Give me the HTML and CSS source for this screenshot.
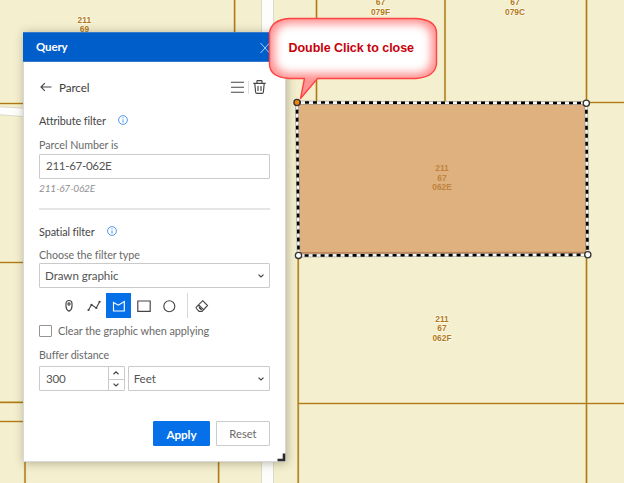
FILE: index.html
```html
<!DOCTYPE html>
<html lang="en">
<head>
<meta charset="utf-8">
<title>Parcel query</title>
<link rel="stylesheet" href="styles.css">
</head>
<body>
<main class="map">
  <svg class="map-layer" viewBox="0 0 624 483" width="624" height="483">
    <path class="road" d="M261.500 -5H273.500V490H261.500ZM-5 106.500L30 108.500V117L-5 114.500Z"/>
    <path class="lot-glow" d="M-2 103.500H30M-2 262.500H30M-2 402.300H30M-2 421.500H30M25 455V485M218.600 455V485M234.600 -2V40M316.500 -2V102M445 -2V103M586.500 -2V485M586 102.500H626M298.200 255V485M298 403.500H626"/>
    <path class="lot" d="M-2 103.500H30M-2 262.500H30M-2 402.300H30M-2 421.500H30M25 455V485M218.600 455V485M234.600 -2V40M316.500 -2V102M445 -2V103M586.500 -2V485M586 102.500H626M298.200 255V485M298 403.500H626"/>
    <g class="lot-label">
      <text x="84.300" y="22.500">211</text><text x="84.500" y="32">69</text>
      <text x="380.500" y="5">67</text><text x="380.500" y="14.500">079F</text>
      <text x="515" y="5">67</text><text x="515" y="14.500">079C</text>
      <text x="442" y="321.500">211</text><text x="442" y="331">67</text><text x="442" y="340.700">062F</text>
    </g>
    <path class="area" d="M297 102.500L586.300 103L587.500 254.500L298.500 255.500Z"/>
    <path class="area-shade" d="M299 252.800L586 252.300V104"/>
    <g class="lot-label muted">
      <text x="442" y="171">211</text><text x="442" y="180.500">67</text><text x="442" y="190.300">062E</text>
    </g>
    <path class="edge rim" d="M297 102.500L586.300 103L587.500 254.800L298.500 255.500Z"/>
    <path class="edge" d="M297 102.500L586.300 103L587.500 254.800L298.500 255.500Z"/>
    <path class="edge dash" d="M297 102.500L586.300 103L587.500 254.800L298.500 255.500Z"/>
    <g class="vertex"><circle cx="586.300" cy="103.200" r="3.100"/><circle cx="587.800" cy="254.800" r="3.100"/><circle cx="298.500" cy="255.400" r="3.100"/><circle class="active" cx="297" cy="102.500" r="3.100"/></g>
  </svg>

  <section class="panel">
    <header class="panel-head">
      <h1>Query</h1>
      <svg width="10" height="12" viewBox="0 0 10 12"><path d="M.5 1L9.500 11M9.500 1L.5 11"/></svg>
    </header>
    <div class="panel-body">
      <div class="task">
        <svg class="ico" width="12" height="10" viewBox="0 0 12 10"><path d="M11.500 5H1M4.800 1.200L1 5L4.800 8.800"/></svg>
        <span class="task-name">Parcel</span>
        <svg class="ico" width="13" height="12" viewBox="0 0 13 12"><path d="M0 1.200H13M0 6.200H13M0 11.200H13"/></svg>
        <i class="bar"></i>
        <svg class="ico" width="13" height="14" viewBox="0 0 13 14"><path d="M.3 3.300H12.700M4 3V1Q4 .6 4.500.6H8.500Q9 .6 9 1V3M1.800 3.500L2.600 12Q2.700 13.400 4 13.400H9Q10.300 13.400 10.400 12L11.200 3.500M5 6V11M8 6V11"/></svg>
      </div>
      <h2 class="attr"><span>Attribute filter</span>
        <svg class="info" width="10" height="10" viewBox="0 0 10 10"><circle cx="5" cy="5" r="4.400"/><path d="M5 4.300V7.600M5 2.200V3.300"/></svg></h2>
      <label class="caption c-number">Parcel Number is</label>
      <div class="field value"><span>211-67-062E</span></div>
      <p class="hint">211-67-062E</p>
      <hr>
      <h2 class="spatial"><span>Spatial filter</span>
        <svg class="info" width="10" height="10" viewBox="0 0 10 10"><circle cx="5" cy="5" r="4.400"/><path d="M5 4.300V7.600M5 2.200V3.300"/></svg></h2>
      <label class="caption c-type">Choose the filter type</label>
      <div class="field select"><span>Drawn graphic</span>
        <svg class="chev" width="6" height="4" viewBox="0 0 6 4"><path d="M.5.6L3 3L5.500.6"/></svg></div>
      <div class="tools">
        <span class="tool"><svg class="ico" width="14" height="14" viewBox="0 0 14 14"><path d="M7 12.300C5 11.300 4 9.500 4 7V4.500C4 2.700 5.300 1.500 7 1.500S10 2.700 10 4.500V7C10 9.500 9 11.300 7 12.300Z"/><circle cx="7" cy="5" r="1.100"/></svg></span>
        <span class="tool"><svg class="ico" width="14" height="14" viewBox="0 0 14 14"><path d="M1.500 11L4.500 5.800L9.300 9L12.600 2.800"/><path class="nodes" d="M1.500 11h.01M4.500 5.800h.01M9.300 9h.01M12.600 2.800h.01"/></svg></span>
        <span class="tool on"><svg class="ico" width="14" height="14" viewBox="0 0 14 14"><path d="M1.500 12V3.500L6.300 6.200L12.300 2.500V12Z"/></svg></span>
        <span class="tool"><svg class="ico" width="14" height="14" viewBox="0 0 14 14"><path d="M.8 2H13.200V12.300H.8Z"/></svg></span>
        <span class="tool"><svg class="ico" width="14" height="14" viewBox="0 0 14 14"><circle cx="7.300" cy="7.200" r="5.500"/></svg></span>
        <span class="tool erase"><svg class="ico" width="14" height="14" viewBox="0 0 14 14"><path d="M7.700 1.700L12.500 6.500L7 12.300H4L1.200 9.300Q.9 8.500 1.500 7.900ZM3.700 5.800L8.500 10.600"/><path class="fill" d="M3.700 6.800L7.200 10.400L6.200 11.300L3.800 9Z"/></svg></span>
      </div>
      <label class="check"><i></i><span>Clear the graphic when applying</span></label>
      <label class="caption c-buffer">Buffer distance</label>
      <div class="distance">
        <div class="field number"><span>300</span>
          <div class="steps">
            <b><svg class="chev" width="6" height="4" viewBox="0 0 6 4"><path d="M.5 3.200L3 .8L5.500 3.200"/></svg></b>
            <b><svg class="chev" width="6" height="4" viewBox="0 0 6 4"><path d="M.5.6L3 3L5.500.6"/></svg></b>
          </div>
        </div>
        <div class="field select unit"><span>Feet</span>
          <svg class="chev" width="6" height="4" viewBox="0 0 6 4"><path d="M.5.6L3 3L5.500.6"/></svg></div>
      </div>
      <div class="actions"><button class="primary">Apply</button><button>Reset</button></div>
    </div>
    <svg class="grip" width="9" height="9" viewBox="0 0 9 9"><path d="M7 .5V7H.5"/></svg>
  </section>

  <svg class="callout" width="180" height="96" viewBox="262 10 180 96">
    <defs>
      <filter id="soft" x="-20%" y="-30%" width="140%" height="160%"><feGaussianBlur stdDeviation="4.500"/></filter>
      <clipPath id="bubble"><path d="M289 18.500H416Q436.500 20 436.500 33V64Q435 77 416 78.500H317.500L300.500 98.500L304.500 78.500H289Q269.500 77 269.500 64V33Q271 20 289 18.500Z"/></clipPath>
    </defs>
    <g clip-path="url(#bubble)"><path class="bubble-bg" d="M262 10H442V106H262Z"/><rect class="bubble-core" x="275" y="24" width="156" height="49" rx="14" filter="url(#soft)"/></g>
    <path class="bubble-line" d="M289 18.500H416Q436.500 20 436.500 33V64Q435 77 416 78.500H317.500L300.500 98.500L304.500 78.500H289Q269.500 77 269.500 64V33Q271 20 289 18.500Z"/>
    <text x="288.500" y="52.300" textLength="125.500">Double Click to close</text>
  </svg>
</main>
</body>
</html>
```

FILE: styles.css
```css
* { box-sizing: border-box; }
body { margin: 0; font-family: Lato, "Open Sans", sans-serif; color: #4a4a4a; }
.map { position: relative; width: 624px; height: 483px; overflow: hidden; background: #f3efcf; }
.map-layer { display: block; }
.road { fill: #fdfdfc; stroke: #dcdac9; stroke-width: 1; }
.lot-glow, .lot { fill: none; stroke: #d9c480; stroke-width: 2.2; }
.lot { stroke: #b07a18; stroke-width: 1.2; }
.lot-label { font: bold 8.4px "Liberation Sans", sans-serif; fill: #b37a20; text-anchor: middle; stroke: #fbf9e8; stroke-width: 1.6; paint-order: stroke; }
.lot-label.muted { fill: #c08440; stroke: none; }
.area { fill: #deb17f; }
.area-shade { fill: none; stroke: #c4885a; stroke-width: 1.5; }
.edge { fill: none; stroke: #f4f4f4; stroke-width: 2.4; }
.edge.rim { stroke: #8d8a80; stroke-width: 3.4; }
.edge.dash { stroke: #000; stroke-width: 2.6; stroke-dasharray: 4 4; }
.vertex circle { fill: #fff; stroke: #333; stroke-width: 1.3; }
.vertex .active { fill: #f5820b; }

.panel { position: absolute; left: 23px; top: 32px; width: 263px; height: 430px; background: #fff; border: 1px solid #d8d8d8; border-top: 0; box-shadow: 1px 1px 9px rgba(70, 65, 30, .38); }
.panel-head { display: flex; align-items: center; justify-content: space-between; height: 30px; margin: 0 -1px; padding: 0 16px 1px 13px; background: #005ecb; border: 1px solid #3979c9; border-width: 1px 0; }
.panel-head h1 { margin: 0; font-size: 11.5px; line-height: 16px; font-weight: 700; color: #fff; letter-spacing: -.15px; }
.panel-head svg { fill: none; stroke: #a9c8ef; stroke-width: 1; margin-top: 2px; }
.panel-body { padding: 0 15px; }
.ico { fill: none; stroke: #454545; stroke-width: 1.15; display: block; }
.task { display: flex; align-items: center; height: 20px; margin-top: 15px; padding: 0 4px 0 1px; }
.task-name { flex: 1; margin-left: 7px; font-size: 11.7px; letter-spacing: -.1px; line-height: 16px; margin-top: -1px; color: #3c3c3c; }
.bar { width: 1px; height: 13px; margin: 0 4px; background: #dedede; }
h2 { display: flex; align-items: center; gap: 12px; margin: 0; height: 16px; font-size: 10.8px; letter-spacing: -.08px; font-weight: 400; color: #444; }
.attr { margin-top: 15px; }
.spatial { margin-top: 13px; }
.info { fill: none; stroke: #3b8eea; stroke-width: .9; }
.caption { display: block; height: 14px; line-height: 14px; font-size: 10.7px; letter-spacing: -.06px; color: #696969; }
.c-number { margin-top: 10px; letter-spacing: 0; }
.c-type { margin-top: 9px; }
.c-buffer { margin-top: 10px; }
.field { display: flex; align-items: center; width: 231px; height: 25px; margin-top: 1px; padding: 0 6px; border: 1px solid #cacaca; border-radius: 1px; font-size: 11.6px; color: #555; white-space: nowrap; }
.value { margin-top: 2px; letter-spacing: -.33px; padding-bottom: 2px; }
.select { justify-content: space-between; padding: 0 5px; letter-spacing: -.07px; }
.chev { fill: none; stroke: #454545; stroke-width: 1.2; }
.hint { margin: 2px 0 0; height: 14px; line-height: 14px; font-size: 10.2px; letter-spacing: -.28px; font-style: italic; color: #929292; }
hr { height: 2px; margin: 13px 0 0; width: 231px; border: 0; background: #e5e5e5; }
.tools { display: flex; height: 25px; margin: 5px 0 0 17px; }
.tool { display: flex; align-items: center; justify-content: center; width: 25px; height: 25px; }
.tool.on { background: #0670e8; }
.tool.on .ico { stroke: #fff; }
.erase { margin-left: 6px; width: 28px; border-left: 1px solid #d6d6d6; }
.nodes { stroke-width: 2.2; stroke-linecap: round; }
.fill { fill: #333; stroke: none; }
.check { display: flex; align-items: center; height: 16px; margin-top: 4px; font-size: 10.9px; letter-spacing: -.06px; color: #696969; }
.check i { width: 13px; height: 12px; margin-top: 2px; margin-right: 6px; border: 1px solid #949494; border-radius: 1px; }
.distance { display: flex; gap: 3px; margin-top: 3px; }
.number { width: 86px; padding-right: 0; justify-content: space-between; letter-spacing: -.2px; }
.unit { width: 143px; }
.steps { width: 16px; height: 23px; border-left: 1px solid #cacaca; }
.steps b { display: flex; align-items: center; justify-content: center; height: 12px; }
.steps b + b { height: 11px; border-top: 1px solid #cacaca; }
.actions { display: flex; gap: 6px; justify-content: flex-end; margin-top: 30px; width: 231px; }
button { width: 54px; height: 25px; padding: 0; border: 1px solid #cacaca; border-radius: 1px; background: #fff; font: 11.2px Lato, sans-serif; color: #6a6a6a; }
button.primary { width: 57px; border-color: #0670e8; background: #0670e8; color: #fff; font-size: 11.7px; font-weight: 700; letter-spacing: -.1px; }
.grip { position: absolute; right: -1px; bottom: -1px; fill: none; stroke: #2c2c2c; stroke-width: 2.6; }

.callout { position: absolute; left: 262px; top: 10px; }
.bubble-bg { fill: #ff9292; }
.bubble-core { fill: #fff; }
.bubble-line { fill: none; stroke: #f44; stroke-width: 1.4; stroke-linejoin: round; }
.callout text { font: bold 12.5px "Liberation Sans", sans-serif; fill: #c8000c; }
```
